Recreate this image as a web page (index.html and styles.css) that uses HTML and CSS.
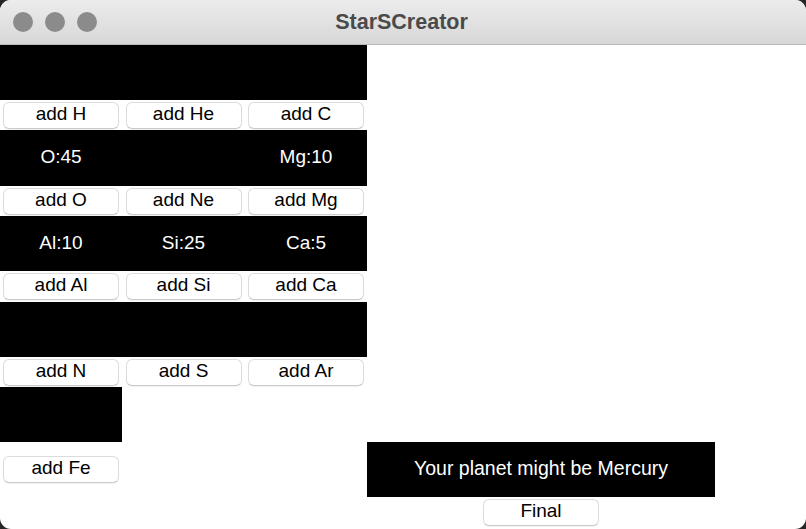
FILE: index.html
```html
<!DOCTYPE html>
<html>
<head>
<meta charset="utf-8">
<title>StarSCreator</title>
<link rel="stylesheet" href="styles.css">
</head>
<body>
<div class="window">
  <div class="titlebar">
    <div class="lights">
      <span class="light"></span>
      <span class="light"></span>
      <span class="light"></span>
    </div>
    <div class="title">StarSCreator</div>
  </div>
  <div class="content">
    <div class="lbl r1 c1"></div>
    <div class="lbl r1 c2"></div>
    <div class="lbl r1 c3"></div>
    <div class="btn r2 c1">add H</div>
    <div class="btn r2 c2">add He</div>
    <div class="btn r2 c3">add C</div>

    <div class="lbl r3 c1">O:45</div>
    <div class="lbl r3 c2"></div>
    <div class="lbl r3 c3">Mg:10</div>
    <div class="btn r4 c1">add O</div>
    <div class="btn r4 c2">add Ne</div>
    <div class="btn r4 c3">add Mg</div>

    <div class="lbl r5 c1">Al:10</div>
    <div class="lbl r5 c2">Si:25</div>
    <div class="lbl r5 c3">Ca:5</div>
    <div class="btn r6 c1">add Al</div>
    <div class="btn r6 c2">add Si</div>
    <div class="btn r6 c3">add Ca</div>

    <div class="lbl r7 c1"></div>
    <div class="lbl r7 c2"></div>
    <div class="lbl r7 c3"></div>
    <div class="btn r8 c1">add N</div>
    <div class="btn r8 c2">add S</div>
    <div class="btn r8 c3">add Ar</div>

    <div class="lbl r9 c1"></div>
    <div class="btn r10 c1">add Fe</div>
    <div class="lbl result r10 c4">Your planet might be Mercury</div>
    <div class="btn final r11 c4">Final</div>
  </div>
</div>
</body>
</html>
```

FILE: styles.css
```css
html, body {
  margin: 0;
  padding: 0;
  width: 806px;
  height: 529px;
  overflow: hidden;
  background: #262626;
}
.window {
  width: 806px;
  height: 529px;
  background: #ffffff;
  border-radius: 11px;
  overflow: hidden;
  display: flex;
  flex-direction: column;
  font-family: "Liberation Sans", Arial, sans-serif;
}
.titlebar {
  height: 44px;
  flex: 0 0 44px;
  border-bottom: 1px solid #b9b9b9;
  background: linear-gradient(#ececec, #d7d7d7);
  display: flex;
  align-items: center;
  position: relative;
}
.lights {
  display: flex;
  gap: 12px;
  padding-left: 13px;
}
.light {
  width: 20px;
  height: 20px;
  border-radius: 50%;
  background: #8b8b8b;
  display: block;
}
.title {
  position: absolute;
  left: 0;
  right: 0;
  top: 0;
  bottom: 0;
  display: flex;
  align-items: center;
  justify-content: center;
  font-weight: bold;
  font-size: 21.5px;
  color: #4a4a4a;
  padding-right: 3px;
}
.content {
  flex: 1;
  display: grid;
  grid-template-columns: 122px 123px 122px 348px 1fr;
  grid-template-rows: 55px 30px 56px 30px 55px 31px 55px 30px 55px 55px 1fr;
}
.lbl {
  background: #000000;
  color: #ffffff;
  font-size: 19px;
  display: flex;
  align-items: center;
  justify-content: center;
  padding-bottom: 2px;
  box-sizing: border-box;
}
.result {
  font-size: 19.5px;
}
.btn {
  width: 116px;
  height: 27px;
  box-sizing: border-box;
  padding-bottom: 4px;
  justify-self: center;
  align-self: center;
  background: #ffffff;
  border: 1px solid #dcdcdc;
  border-bottom-color: #cacaca;
  border-radius: 6px;
  box-shadow: 0 1px 1px rgba(0, 0, 0, 0.06);
  color: #000000;
  font-size: 19px;
  display: flex;
  align-items: center;
  justify-content: center;
  line-height: 1;
}
.final {
  align-self: start;
  margin-top: 2px;
}
.r1 { grid-row: 1; }
.r2 { grid-row: 2; }
.r3 { grid-row: 3; }
.r4 { grid-row: 4; }
.r5 { grid-row: 5; }
.r6 { grid-row: 6; }
.r7 { grid-row: 7; }
.r8 { grid-row: 8; }
.r9 { grid-row: 9; }
.r10 { grid-row: 10; }
.r11 { grid-row: 11; }
.c1 { grid-column: 1; }
.c2 { grid-column: 2; }
.c3 { grid-column: 3; }
.c4 { grid-column: 4; }
```
